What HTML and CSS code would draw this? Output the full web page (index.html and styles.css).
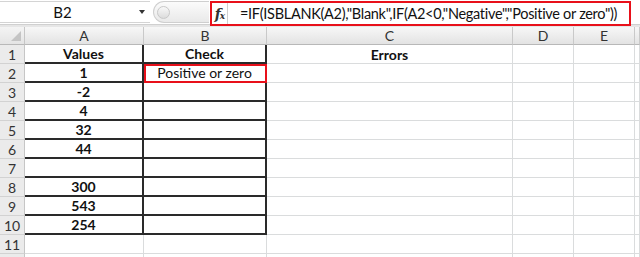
FILE: index.html
```html
<!DOCTYPE html>
<html>
<head>
<meta charset="utf-8">
<link rel="stylesheet" href="styles.css">
</head>
<body>
<div class="app">
  <div class="fbar">
    <div class="namebox"><span class="ref">B2</span><span class="caret"></span></div>
    <div class="grip"><span class="knob"></span></div>
    <div class="formula">
      <span class="fx"><i>f</i><span class="sx">x</span></span>
      <span class="ftext">=IF(ISBLANK(A2),"Blank",IF(A2&lt;0,"Negative","Positive or zero"))</span>
    </div>
  </div>
  <div class="band"></div>
  <div class="grid">
    <div class="corner"><span class="tri"></span></div>
    <div class="ch">A</div><div class="ch">B</div><div class="ch">C</div><div class="ch">D</div><div class="ch">E</div><div class="ch last"></div>

    <div class="rh">1</div><div class="c t b">Values</div><div class="c t b">Check</div><div class="c b">Errors</div><div class="c"></div><div class="c"></div><div class="c"></div>
    <div class="rh">2</div><div class="c t b">1</div><div class="c t sel">Positive or zero</div><div class="c"></div><div class="c"></div><div class="c"></div><div class="c"></div>
    <div class="rh">3</div><div class="c t b">-2</div><div class="c t"></div><div class="c"></div><div class="c"></div><div class="c"></div><div class="c"></div>
    <div class="rh">4</div><div class="c t b">4</div><div class="c t"></div><div class="c"></div><div class="c"></div><div class="c"></div><div class="c"></div>
    <div class="rh">5</div><div class="c t b">32</div><div class="c t"></div><div class="c"></div><div class="c"></div><div class="c"></div><div class="c"></div>
    <div class="rh">6</div><div class="c t b">44</div><div class="c t"></div><div class="c"></div><div class="c"></div><div class="c"></div><div class="c"></div>
    <div class="rh">7</div><div class="c t b"></div><div class="c t"></div><div class="c"></div><div class="c"></div><div class="c"></div><div class="c"></div>
    <div class="rh">8</div><div class="c t b">300</div><div class="c t"></div><div class="c"></div><div class="c"></div><div class="c"></div><div class="c"></div>
    <div class="rh">9</div><div class="c t b">543</div><div class="c t"></div><div class="c"></div><div class="c"></div><div class="c"></div><div class="c"></div>
    <div class="rh">10</div><div class="c t b">254</div><div class="c t"></div><div class="c"></div><div class="c"></div><div class="c"></div><div class="c"></div>
    <div class="rh">11</div><div class="c"></div><div class="c"></div><div class="c"></div><div class="c"></div><div class="c"></div><div class="c"></div>
    <div class="rh"></div><div class="c"></div><div class="c"></div><div class="c"></div><div class="c"></div><div class="c"></div><div class="c"></div>
  </div>
</div>
</body>
</html>
```

FILE: styles.css
```css
* { box-sizing: border-box; }
html, body { margin: 0; padding: 0; }
body {
  width: 640px;
  height: 257px;
  overflow: hidden;
  background: #fff;
  font-family: Lato, "Open Sans", sans-serif;
  font-size: 14px;
  color: #000;
}
.app { width: 640px; height: 257px; overflow: hidden; }

.fbar {
  height: 24px;
  display: flex;
  align-items: flex-start;
  background: #fff;
}
.namebox {
  width: 150px;
  height: 22px;
  margin-top: 1px;
  border-top: 1px solid #d4d4d4;
  border-bottom: 1px solid #d4d4d4;
  display: flex;
  align-items: center;
}
.ref {
  flex: 1;
  text-align: center;
  padding-right: 14px;
  font-size: 15px;
  color: #111;
}
.caret {
  width: 0; height: 0;
  border-left: 3px solid transparent;
  border-right: 3px solid transparent;
  border-top: 4px solid #333;
  margin-right: 5px;
}
.grip {
  width: 56px;
  height: 22px;
  margin-top: 1px;
  margin-left: 3px;
  border: 1px solid #cfcfcf;
  border-right: none;
  border-radius: 11px 0 0 11px;
  background: linear-gradient(#fbfbfb, #e9e9e9);
  display: flex;
  align-items: center;
  padding-left: 3px;
}
.knob {
  width: 13px;
  height: 13px;
  border-radius: 50%;
  border: 1px solid #c8c8c8;
  background: linear-gradient(#f8f8f8, #dcdcdc);
}
.formula {
  width: 421px;
  height: 25px;
  margin-top: 1px;
  margin-left: 1px;
  border: 2px solid #e8101a;
  display: flex;
  align-items: center;
  background: #fff;
  overflow: hidden;
}
.fx {
  width: 16px;
  height: 100%;
  flex: none;
  border-right: 1px solid #cfcfcf;
  display: flex;
  align-items: center;
  justify-content: center;
  font-family: "DejaVu Serif", "Liberation Serif", serif;
  color: #333;
  padding-left: 1px;
}
.fx i { font-size: 14px; font-weight: bold; }
.sx { font-size: 9px; font-style: italic; font-weight: bold; margin-top: 4px; margin-left: -1px; }
.ftext {
  padding-left: 12px;
  font-size: 14.5px;
  letter-spacing: -0.3px;
  white-space: nowrap;
  color: #111;
}

.band { height: 3px; background: #e6e6e6; border-top: 1px solid #d0d0d0; }

.grid {
  display: grid;
  grid-template-columns: 25px 119px 123px 246px 61px 61px 5px;
  grid-template-rows: 18px;
  grid-auto-rows: 19px;
}
.corner {
  background: linear-gradient(#f4f4f4, #e4e4e4);
  border-right: 1px solid #c6c6c6;
  border-bottom: 1px solid #b8b8b8;
  position: relative;
}
.tri {
  position: absolute;
  right: 3px; bottom: 3px;
  width: 0; height: 0;
  border-left: 10px solid transparent;
  border-bottom: 10px solid #c4c4c4;
}
.ch {
  background: linear-gradient(#f7f7f7, #e3e3e3);
  border-right: 1px solid #c9c9c9;
  border-bottom: 1px solid #b8b8b8;
  display: flex;
  align-items: center;
  justify-content: center;
  color: #333;
  font-size: 14px;
}
.rh {
  background: #ebebeb;
  border-right: 1px solid #c6c6c6;
  border-bottom: 1px solid #d2d2d2;
  display: flex;
  align-items: center;
  justify-content: center;
  color: #333;
  font-size: 14px;
}
.c {
  border-right: 1px solid #dadcdd;
  border-bottom: 1px solid #dadcdd;
  display: flex;
  align-items: center;
  justify-content: center;
  white-space: nowrap;
  font-size: 14px;
  color: #111;
}
.c.t {
  border-right: 2px solid #2a2a2a;
  border-bottom: 2px solid #2a2a2a;
}
.b { font-weight: bold; }
.sel {
  outline: 2px solid #e8101a;
  outline-offset: -2px;
}
```
